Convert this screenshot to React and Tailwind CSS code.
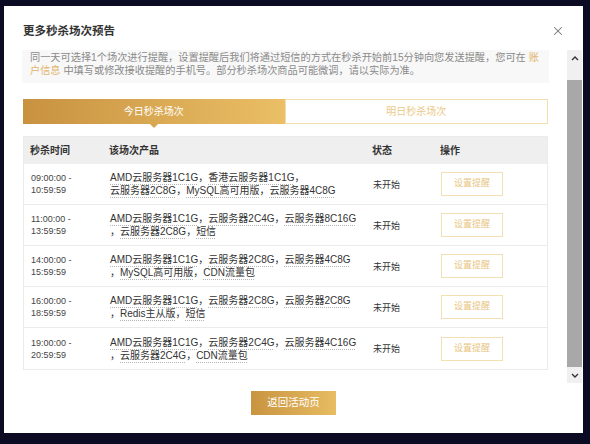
import { X } from "lucide-react";

const SESSIONS = [
  {
    start: "09:00:00 -",
    end: "10:59:59",
    lines: [
      ["AMD云服务器1C1G", "，", "香港云服务器1C1G", "，"],
      ["云服务器2C8G", "，", "MySQL高可用版", "，", "云服务器4C8G"],
    ],
  },
  {
    start: "11:00:00 -",
    end: "13:59:59",
    lines: [
      ["AMD云服务器1C1G", "，", "云服务器2C4G", "，", "云服务器8C16G"],
      ["，", "云服务器2C8G", "，", "短信"],
    ],
  },
  {
    start: "14:00:00 -",
    end: "15:59:59",
    lines: [
      ["AMD云服务器1C1G", "，", "云服务器2C8G", "，", "云服务器4C8G"],
      ["，", "MySQL高可用版", "，", "CDN流量包"],
    ],
  },
  {
    start: "16:00:00 -",
    end: "18:59:59",
    lines: [
      ["AMD云服务器1C1G", "，", "云服务器2C8G", "，", "云服务器2C8G"],
      ["，", "Redis主从版", "，", "短信"],
    ],
  },
  {
    start: "19:00:00 -",
    end: "20:59:59",
    lines: [
      ["AMD云服务器1C1G", "，", "云服务器2C4G", "，", "云服务器4C16G"],
      ["，", "云服务器2C4G", "，", "CDN流量包"],
    ],
  },
];

const FONT = { fontFamily: '"Liberation Sans", "Noto Sans CJK SC", sans-serif' };

function ProductLine({ parts }) {
  return (
    <div className="whitespace-nowrap">
      {parts.map((p, i) =>
        p === "，" ? (
          <span key={i}>，</span>
        ) : (
          <span
            key={i}
            className="underline decoration-dotted decoration-[#b5b5b5] underline-offset-[3px]"
          >
            {p}
          </span>
        )
      )}
    </div>
  );
}

function Row({ session, last }) {
  return (
    <div
      className={`grid h-[41px] grid-cols-[78px_262px_69px_1fr] items-center ${
        last ? "" : "border-b border-[#ebebeb]"
      }`}
    >
      <div className="pl-[7px] text-[9px] leading-[12px] text-[#444]">
        <div>{session.start}</div>
        <div>{session.end}</div>
      </div>
      <div className="pl-[8px] text-[10px] leading-[13px] text-[#333]">
        {session.lines.map((l, i) => (
          <ProductLine key={i} parts={l} />
        ))}
      </div>
      <div className="pl-[9px] pt-[3px] text-[9px] text-[#333]">未开始</div>
      <div className="pl-[8px]">
        <button className="flex h-[24px] w-[62px] items-center justify-center border border-[#f3dfb4] bg-white text-[9px] text-[#e8c57f]">
          设置提醒
        </button>
      </div>
    </div>
  );
}

export default function App() {
  return (
    <div className="h-[444px] w-[590px] overflow-hidden bg-[#0b0b23] pl-[4px] pt-[6px]" style={FONT}>
      <div className="flex h-[427px] w-[579px] flex-col bg-white">
        <div className="flex h-[44px] items-start justify-between pl-[19px] pr-[18px] pt-[17px]">
          <h2 className="text-[11.5px] font-bold leading-[16px] text-[#333]">更多秒杀场次预告</h2>
          <X className="mt-[1px] h-[14px] w-[14px] text-[#777]" strokeWidth={1.8} />
        </div>

        <div className="flex h-[333px]">
          <div className="w-[563px] overflow-hidden pl-[18px] pr-[18px]">
            <div className="bg-[#f8f8f8] pb-[6px] pl-[8px] pr-[2px] pt-[1px] text-[10.2px] leading-[13px] text-[#8a8a8a]">
              同一天可选择1个场次进行提醒，设置提醒后我们将通过短信的方式在秒杀开始前15分钟向您发送提醒，您可在&nbsp;
              <span className="text-[#e2b66c]">账户信息</span>
              &nbsp;中填写或修改接收提醒的手机号。部分秒杀场次商品可能微调，请以实际为准。
            </div>

            <div className="mx-[1px] mt-[16px] flex h-[25px]">
              <div className="relative flex flex-1 items-center justify-center bg-gradient-to-r from-[#c89240] to-[#eabf66] text-[10px] text-white">
                今日秒杀场次
                <span className="absolute left-1/2 top-full -translate-x-1/2 border-x-[4px] border-t-[4px] border-x-transparent border-t-[#d6a64e]" />
              </div>
              <div className="flex flex-1 items-center justify-center border border-[#f2dfae] text-[10px] text-[#ebc988]">
                明日秒杀场次
              </div>
            </div>

            <div className="mx-[1px] mt-[12px] border border-[#ebebeb]">
              <div className="grid h-[27px] grid-cols-[78px_262px_69px_1fr] items-center bg-[#efefef] text-[10px] font-bold text-[#333]">
                <div className="pl-[6px]">秒杀时间</div>
                <div className="pl-[7px]">该场次产品</div>
                <div className="pl-[8px]">状态</div>
                <div className="pl-[7px]">操作</div>
              </div>
              {SESSIONS.map((s, i) => (
                <Row key={i} session={s} last={i === SESSIONS.length - 1} />
              ))}
            </div>
          </div>

          <div className="flex w-[15px] flex-col bg-[#f0f0f0]">
            <div className="flex h-[16px] items-center justify-center">
              <svg width="8" height="5" viewBox="0 0 8 5">
                <path d="M1 4 L4 1 L7 4" fill="none" stroke="#333" strokeWidth="1.4" />
              </svg>
            </div>
            <div className="h-[14px]" />
            <div className="flex-1 bg-[#a8a8a8]" />
            <div className="flex h-[16px] items-center justify-center">
              <svg width="8" height="5" viewBox="0 0 8 5">
                <path d="M1 1 L4 4 L7 1" fill="none" stroke="#333" strokeWidth="1.4" />
              </svg>
            </div>
          </div>
        </div>

        <div className="flex justify-center pt-[8px]">
          <button className="flex h-[24px] w-[85px] items-center justify-center bg-gradient-to-r from-[#c99440] to-[#e7bc62] text-[10.5px] text-white">
            返回活动页
          </button>
        </div>
      </div>
    </div>
  );
}
